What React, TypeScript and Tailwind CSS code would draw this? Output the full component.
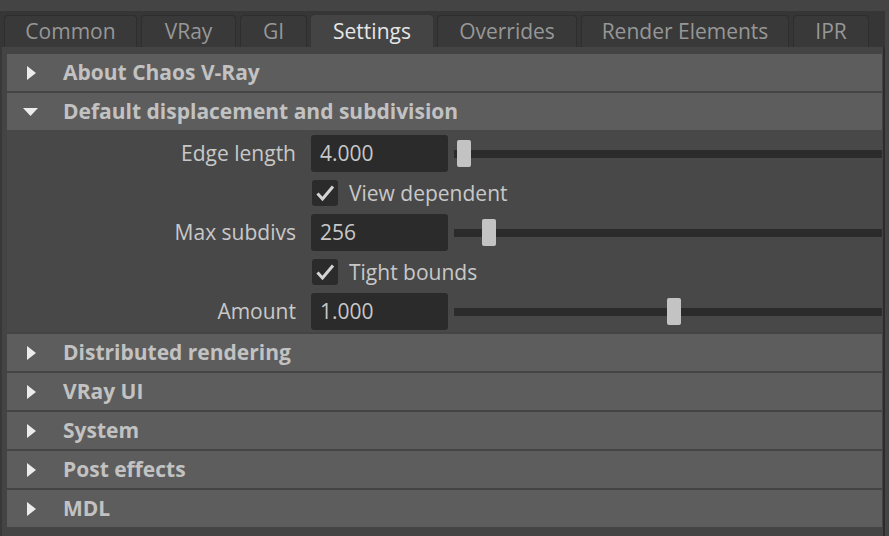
import React from "react";

const font = { fontFamily: '"Open Sans", "Noto Sans", sans-serif' };

function RightTri() {
  return (
    <svg width="9" height="14" viewBox="0 0 9 14" className="shrink-0">
      <polygon points="0,0 9,7 0,14" fill="#ececec" />
    </svg>
  );
}
function DownTri() {
  return (
    <svg width="15" height="8" viewBox="0 0 15 8" className="shrink-0">
      <polygon points="0,0 15,0 7.5,8" fill="#ececec" />
    </svg>
  );
}

function Header({ title, open }: { title: string; open?: boolean }) {
  return (
    <div className="h-[37px] bg-[#5d5d5d] flex items-center shrink-0">
      <div className="w-[56px] flex items-center">
        {open ? (
          <div className="pl-[16px]">
            <DownTri />
          </div>
        ) : (
          <div className="pl-[20px]">
            <RightTri />
          </div>
        )}
      </div>
      <span className="text-[21px] font-bold text-[#c2c2c2] leading-none">{title}</span>
    </div>
  );
}

function Slider({ pos }: { pos: number }) {
  return (
    <div className="relative flex-1 h-[37px] flex items-center ml-[6px]">
      <div className="w-full h-[8px] bg-[#2b2b2b]" />
      <div
        className="absolute top-[5px] w-[14px] h-[27px] rounded-[2px] bg-[#c3c3c3]"
        style={{ left: pos }}
      />
    </div>
  );
}

function FieldRow({ label, value, pos }: { label: string; value: string; pos: number }) {
  return (
    <div className="flex items-center h-[37px]">
      <div className="w-[304px] text-right text-[21px] text-[#c8c8c8] pr-[15px] leading-none">{label}</div>
      <div className="w-[137px] h-[37px] bg-[#2b2b2b] rounded-[3px] flex items-center pl-[9px] text-[21px] text-[#c8c8c8] leading-none">
        {value}
      </div>
      <Slider pos={pos} />
    </div>
  );
}

function CheckRow({ label }: { label: string }) {
  return (
    <div className="flex items-center h-[26px]">
      <div className="w-[305px]" />
      <div className="w-[26px] h-[26px] bg-[#2b2b2b] rounded-[3px] flex items-center justify-center">
        <svg width="22" height="22" viewBox="0 0 22 22">
          <path d="M3.5 11.5 L8.5 17 L19 4.5" stroke="#d4d4d4" strokeWidth="3" fill="none" strokeLinejoin="miter" />
        </svg>
      </div>
      <span className="ml-[11px] text-[21px] text-[#c8c8c8] leading-none">{label}</span>
    </div>
  );
}

const tabs = [
  { name: "Common", w: 133 },
  { name: "VRay", w: 95 },
  { name: "GI", w: 67 },
  { name: "Settings", w: 122, active: true },
  { name: "Overrides", w: 140 },
  { name: "Render Elements", w: 208 },
  { name: "IPR", w: 76 },
];

export default function App() {
  return (
    <div className="w-[889px] h-[536px] bg-[#444444] overflow-hidden" style={font}>
      <div className="h-[11px]" />
      <div className="w-[885px] h-[36px] bg-[#363636] flex items-end gap-[4px] pl-[4px]">
        {tabs.map((t) => (
          <div
            key={t.name}
            className={
              "h-[32px] rounded-t-[4px] border border-b-0 flex items-center justify-center text-[21px] leading-none " +
              (t.active
                ? "bg-[#444444] border-[#444444] text-[#e6e6e6]"
                : "bg-[#393939] border-[#2e2e2e] text-[#979797]")
            }
            style={{ width: t.w }}
          >
            {t.name}
          </div>
        ))}
      </div>
      <div className="w-[885px] h-[489px] border-l-[2px] border-r-[2px] border-l-[#383838] border-r-[#2d2d2d] pl-[5px] pr-[1px] pt-[7px] flex flex-col gap-[2px]">
        <Header title="About Chaos V-Ray" />
        <Header title="Default displacement and subdivision" open />
        <div className="h-[202px] -mt-[2px] bg-[#484848] flex flex-col pt-[5px] gap-[8px]">
          <FieldRow label="Edge length" value="4.000" pos={3} />
          <CheckRow label="View dependent" />
          <FieldRow label="Max subdivs" value="256" pos={28} />
          <CheckRow label="Tight bounds" />
          <FieldRow label="Amount" value="1.000" pos={213} />
        </div>
        <Header title="Distributed rendering" />
        <Header title="VRay UI" />
        <Header title="System" />
        <Header title="Post effects" />
        <Header title="MDL" />
      </div>
    </div>
  );
}
